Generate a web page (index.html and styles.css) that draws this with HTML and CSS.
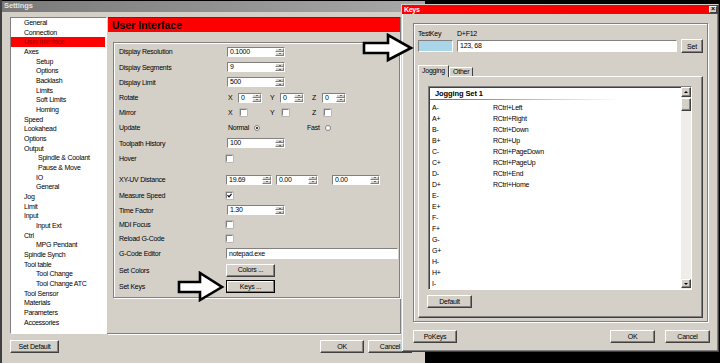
FILE: index.html
```html
<!DOCTYPE html>
<html>

<head>
    <meta charset="UTF-8">
    <meta name="viewport" content="width=device-width, initial-scale=1">
    <title>Settings</title>
    <link rel="stylesheet" href="styles.css">
</head>

<body>
    <!-- settings window -->
    <div class="settings">
        <div class="titlebar">Settings</div>
        <div class="settings-main">
            <!-- page tree -->
            <ul class="tree">
                <li>General</li>
                <li>Connection</li>
                <li class="selected">User Interface</li>
                <li>Axes</li>
                <li class="sub">Setup</li>
                <li class="sub">Options</li>
                <li class="sub">Backlash</li>
                <li class="sub">Limits</li>
                <li class="sub">Soft Limits</li>
                <li class="sub">Homing</li>
                <li>Speed</li>
                <li>Lookahead</li>
                <li>Options</li>
                <li>Output</li>
                <li class="sub2">Spindle &amp; Coolant</li>
                <li class="sub2">Pause &amp; Move</li>
                <li class="sub">IO</li>
                <li class="sub">General</li>
                <li>Jog</li>
                <li>Limit</li>
                <li>Input</li>
                <li class="sub">Input Ext</li>
                <li>Ctrl</li>
                <li class="sub">MPG Pendant</li>
                <li>Spindle Synch</li>
                <li>Tool table</li>
                <li class="sub">Tool Change</li>
                <li class="sub">Tool Change ATC</li>
                <li>Tool Sensor</li>
                <li>Materials</li>
                <li>Parameters</li>
                <li>Accessories</li>
            </ul>

            <!-- user interface page -->
            <div class="page">
                <div class="page-header">User Interface</div>
                <div class="group">
                    <div class="row">
                        <span class="label">Display Resolution</span>
                        <span class="num w58"><span class="val">0.1000</span><span class="spin"><i></i><i class="dn"></i></span></span>
                    </div>
                    <div class="row">
                        <span class="label">Display Segments</span>
                        <span class="num w58"><span class="val">9</span><span class="spin"><i></i><i class="dn"></i></span></span>
                    </div>
                    <div class="row">
                        <span class="label">Display Limit</span>
                        <span class="num w58"><span class="val">500</span><span class="spin"><i></i><i class="dn"></i></span></span>
                    </div>
                    <div class="row">
                        <span class="label">Rotate</span>
                        <span class="axis"><span class="axis-name">X</span><span class="num w24"><span class="val">0</span><span class="spin"><i></i><i class="dn"></i></span></span></span>
                        <span class="axis"><span class="axis-name">Y</span><span class="num w24"><span class="val">0</span><span class="spin"><i></i><i class="dn"></i></span></span></span>
                        <span class="axis"><span class="axis-name">Z</span><span class="num w24"><span class="val">0</span><span class="spin"><i></i><i class="dn"></i></span></span></span>
                    </div>
                    <div class="row">
                        <span class="label">Mirror</span>
                        <span class="axis"><span class="axis-name">X</span><span class="check"></span></span>
                        <span class="axis"><span class="axis-name">Y</span><span class="check"></span></span>
                        <span class="axis"><span class="axis-name">Z</span><span class="check"></span></span>
                    </div>
                    <div class="row">
                        <span class="label">Update</span>
                        <span class="opt normal">Normal<span class="radio on"></span></span>
                        <span class="opt">Fast<span class="radio"></span></span>
                    </div>
                    <div class="row">
                        <span class="label">Toolpath History</span>
                        <span class="num w58"><span class="val">100</span><span class="spin"><i></i><i class="dn"></i></span></span>
                    </div>
                    <div class="row">
                        <span class="label">Hover</span>
                        <span class="check"></span>
                    </div>
                    <div class="spacer"></div>
                    <div class="row">
                        <span class="label">XY-UV Distance</span>
                        <span class="num w46"><span class="val">19.69</span><span class="spin"><i></i><i class="dn"></i></span></span>
                        <span class="num w42 gap4"><span class="val">0.00</span><span class="spin"><i></i><i class="dn"></i></span></span>
                        <span class="num w48 gap14"><span class="val">0.00</span><span class="spin"><i></i><i class="dn"></i></span></span>
                    </div>
                    <div class="row">
                        <span class="label">Measure Speed</span>
                        <span class="check"><svg width="5" height="5" viewBox="0 0 5 5"><path d="M0.5 2.2 L2 3.8 L4.6 0.8" fill="none" stroke="#000" stroke-width="1.2" /></svg></span>
                    </div>
                    <div class="row">
                        <span class="label">Time Factor</span>
                        <span class="num w58"><span class="val">1.30</span><span class="spin"><i></i><i class="dn"></i></span></span>
                    </div>
                    <div class="row short">
                        <span class="label">MDI Focus</span>
                        <span class="check"></span>
                    </div>
                    <div class="row">
                        <span class="label">Reload G-Code</span>
                        <span class="check"></span>
                    </div>
                    <div class="row">
                        <span class="label">G-Code Editor</span>
                        <span class="text-input">notepad.exe</span>
                    </div>
                    <div class="row tall">
                        <span class="label">Set Colors</span>
                        <button class="btn small">Colors ...</button>
                    </div>
                    <div class="row">
                        <span class="label">Set Keys</span>
                        <button class="btn small focus">Keys ...</button>
                    </div>
                </div>
            </div>
        </div>
        <div class="settings-footer">
            <button class="btn set-default">Set Default</button>
            <button class="btn ok">OK</button>
            <button class="btn cancel">Cancel</button>
        </div>
    </div>

    <!-- keys dialog -->
    <div class="keys">
        <div class="keys-title">
            <span>Keys</span>
            <span class="close">×</span>
        </div>
        <div class="keys-body">
            <div class="frame">
                <div class="tk-labels">
                    <span class="tk-name">TestKey</span>
                    <span>D+F12</span>
                </div>
                <div class="tk-row">
                    <span class="tk-box"></span>
                    <span class="tk-input">123, 68</span>
                    <button class="btn tk-set">Set</button>
                </div>
                <div class="tabs">
                    <span class="tab active">Jogging</span>
                    <span class="tab">Other</span>
                </div>
                <div class="tab-panel">
                    <div class="listbox">
                        <div class="lb-main">
                            <div class="lb-head">Jogging Set 1</div>
                            <div class="lb-rows">
                                <div class="lb-row"><span class="lb-key">A-</span><span>RCtrl+Left</span></div>
                                <div class="lb-row"><span class="lb-key">A+</span><span>RCtrl+Right</span></div>
                                <div class="lb-row"><span class="lb-key">B-</span><span>RCtrl+Down</span></div>
                                <div class="lb-row"><span class="lb-key">B+</span><span>RCtrl+Up</span></div>
                                <div class="lb-row"><span class="lb-key">C-</span><span>RCtrl+PageDown</span></div>
                                <div class="lb-row"><span class="lb-key">C+</span><span>RCtrl+PageUp</span></div>
                                <div class="lb-row"><span class="lb-key">D-</span><span>RCtrl+End</span></div>
                                <div class="lb-row"><span class="lb-key">D+</span><span>RCtrl+Home</span></div>
                                <div class="lb-row"><span class="lb-key">E-</span></div>
                                <div class="lb-row"><span class="lb-key">E+</span></div>
                                <div class="lb-row"><span class="lb-key">F-</span></div>
                                <div class="lb-row"><span class="lb-key">F+</span></div>
                                <div class="lb-row"><span class="lb-key">G-</span></div>
                                <div class="lb-row"><span class="lb-key">G+</span></div>
                                <div class="lb-row"><span class="lb-key">H-</span></div>
                                <div class="lb-row"><span class="lb-key">H+</span></div>
                                <div class="lb-row"><span class="lb-key">I-</span></div>
                            </div>
                        </div>
                        <div class="scrollbar">
                            <span class="sb-btn up"></span>
                            <span class="sb-thumb"></span>
                            <span class="sb-track"></span>
                            <span class="sb-btn down"></span>
                        </div>
                    </div>
                    <button class="btn default">Default</button>
                </div>
            </div>
            <div class="keys-footer">
                <button class="btn pokeys">PoKeys</button>
                <button class="btn k-ok">OK</button>
                <button class="btn k-cancel">Cancel</button>
            </div>
        </div>
    </div>

    <!-- callout arrows -->
    <svg class="arrow arrow-testkey" width="52" height="30" viewBox="0 0 52 30">
        <polygon points="2,10 26,10 26,2 49,15 26,27 26,20 2,20" fill="#fff" stroke="#000" stroke-width="2.6" />
    </svg>
    <svg class="arrow arrow-keys" width="48" height="31" viewBox="0 0 48 31">
        <polygon points="2,11 23,11 23,2 45,16 23,29 23,21 2,21" fill="#fff" stroke="#000" stroke-width="2.6" />
    </svg>
</body>

</html>
```

FILE: styles.css
```css
* {
    box-sizing: border-box;
}

body {
    margin: 0;
    width: 720px;
    height: 363px;
    overflow: hidden;
    position: relative;
    background-color: #000;
    font-family: "Liberation Sans", Arial, sans-serif;
    font-size: 7px;
    letter-spacing: -0.25px;
    color: #000;
}

button {
    font: inherit;
    letter-spacing: inherit;
    color: inherit;
    margin: 0;
    padding: 0;
}

/* raised windows button */
.btn {
    height: 13px;
    line-height: 10px;
    text-align: center;
    background-color: #d4d0c8;
    border: 1px solid;
    border-color: #fff #404040 #404040 #fff;
    box-shadow: inset -1px -1px 0 #808080;
}

/* settings window */
.settings {
    width: 425px;
    height: 363px;
    display: flex;
    flex-direction: column;
    background-color: #d4d0c8;
    border-left: 2px solid #404040;
}

.titlebar {
    height: 12px;
    padding-left: 2px;
    border-top: 1px solid #000;
    background: linear-gradient(to right, #7a7a7a, #a8a8a8);
    color: #e4e4e4;
    font-size: 7.5px;
    font-weight: bold;
    letter-spacing: -0.1px;
    line-height: 10px;
}

.settings-main {
    display: flex;
    padding: 5px 0 0 8px;
}

.tree {
    list-style: none;
    margin: 0;
    padding: 0;
    width: 97px;
    height: 317px;
    overflow: hidden;
    background-color: #fff;
    border: 1px solid;
    border-color: #808080 #fff #fff #808080;
}

.tree li {
    height: 9.68px;
    line-height: 9.68px;
    padding-left: 13px;
    white-space: nowrap;
}

.tree .sub {
    padding-left: 25px;
}

.tree .sub2 {
    padding-left: 27px;
}

.tree .selected {
    margin-right: 1px;
    background-color: #f00;
    color: #a00000;
}

.page {
    width: 294px;
    height: 317px;
    padding-left: 1px;
    border-right: 1px solid #808080;
    border-bottom: 1px solid #808080;
    box-shadow: 1px 1px 0 #fff;
}

.page-header {
    height: 15px;
    padding-left: 4px;
    background-color: #f00;
    border-top: 1px solid #c00000;
    font-size: 10.5px;
    font-weight: bold;
    letter-spacing: 0;
    line-height: 14px;
}

.group {
    height: 256px;
    margin: 10px 0 0 5px;
    padding: 1.4px 0 0 5px;
    border: 1px solid #808080;
    box-shadow: inset 1px 1px 0 #fff, 1px 1px 0 #fff;
}

.row {
    display: flex;
    align-items: center;
    height: 15.2px;
    white-space: nowrap;
}

.row.short {
    height: 13px;
}

.row.tall {
    height: 18px;
}

.spacer {
    height: 6.4px;
}

.label {
    width: 107px;
    flex-shrink: 0;
}

/* spin edit */
.num {
    display: flex;
    height: 10px;
    margin-left: 1px;
    background-color: #fff;
    border: 1px solid;
    border-color: #808080 #fff #fff #808080;
}

.w58 { width: 58px; }
.w24 { width: 24px; }
.w46 { width: 46px; margin-left: 0; }
.w42 { width: 42px; }
.w48 { width: 48px; }
.gap4 { margin-left: 4px; }
.gap14 { margin-left: 14px; }

.val {
    flex: 1;
    padding-left: 2px;
    line-height: 8px;
    overflow: hidden;
}

.spin {
    width: 9px;
    display: flex;
    flex-direction: column;
    background-color: #d4d0c8;
}

.spin i {
    flex: 1;
    display: flex;
    align-items: center;
    justify-content: center;
    border: 1px solid;
    border-color: #fff #808080 #808080 #fff;
}

.spin i::before {
    content: "";
    border-left: 1.5px solid transparent;
    border-right: 1.5px solid transparent;
    border-bottom: 1.5px solid #000;
}

.spin i.dn::before {
    border-bottom: 0;
    border-top: 1.5px solid #000;
}

.axis {
    display: flex;
    align-items: center;
    width: 42px;
}

.axis-name {
    width: 12px;
    padding-left: 2px;
}

.axis .num {
    margin-left: 0;
}

.axis .check {
    margin-left: 2px;
}

.check {
    width: 7px;
    height: 7px;
    display: flex;
    align-items: center;
    justify-content: center;
    background-color: #fff;
    border: 1px solid;
    border-color: #808080 #fff #fff #808080;
    box-shadow: 0 0 0 0.5px #a0a0a0;
}

.opt {
    display: flex;
    align-items: center;
    padding-left: 2px;
}

.opt.normal {
    width: 79px;
}

.radio {
    width: 6px;
    height: 6px;
    margin-left: 5px;
    display: flex;
    align-items: center;
    justify-content: center;
    background-color: #fff;
    border: 1px solid #808080;
    border-radius: 50%;
}

.radio.on::after {
    content: "";
    width: 2px;
    height: 2px;
    border-radius: 50%;
    background-color: #000;
}

.text-input {
    width: 172px;
    height: 11px;
    padding-left: 2px;
    line-height: 9px;
    background-color: #fff;
    border: 1px solid;
    border-color: #808080 #fff #fff #808080;
}

.btn.small {
    width: 49px;
}

.btn.focus {
    border-color: #000;
    box-shadow: inset -1px -1px 0 #808080, inset 1px 1px 0 #fff;
}

.settings-footer {
    display: flex;
    padding: 6px 13px 0 8px;
}

.set-default {
    width: 49px;
}

.ok {
    width: 44px;
    margin-left: auto;
}

.cancel {
    width: 44px;
    margin-left: 4px;
}

/* keys dialog */
.keys {
    position: absolute;
    left: 401px;
    top: 4px;
    width: 318px;
    height: 348px;
    background-color: #d4d0c8;
    border: 1px solid;
    border-color: #d4d0c8 #404040 #404040 #d4d0c8;
    box-shadow: inset 1px 1px 0 #fff, inset -1px -1px 0 #808080;
}

.keys-title {
    height: 9px;
    display: flex;
    align-items: center;
    justify-content: space-between;
    padding-left: 2px;
    background: linear-gradient(to right, #f00, #f40000);
    color: #fff;
    font-weight: bold;
    letter-spacing: -0.3px;
}

.close {
    width: 8px;
    height: 7px;
    margin-right: 1px;
    background-color: #d4d0c8;
    border: 1px solid;
    border-color: #fff #404040 #404040 #fff;
    color: #000;
    font-size: 7px;
    line-height: 4px;
    text-align: center;
}

.keys-body {
    padding: 9px 8px 0 11px;
}

.frame {
    width: 295px;
    height: 299px;
    padding: 5px 4px 0 4px;
    border: 1px solid #808080;
    box-shadow: inset 1px 1px 0 #fff, 1px 1px 0 #fff;
}

.tk-labels {
    display: flex;
    height: 10px;
    line-height: 10px;
}

.tk-name {
    width: 39px;
}

.tk-row {
    display: flex;
    align-items: center;
    height: 14px;
}

.tk-box {
    width: 35px;
    height: 12px;
    background-color: #a9d5e8;
    border: 1px solid;
    border-color: #808080 #fff #fff #808080;
}

.tk-input {
    width: 220px;
    height: 12px;
    margin-left: 4px;
    padding-left: 2px;
    line-height: 10px;
    background-color: #fff;
    border: 1px solid;
    border-color: #808080 #fff #fff #808080;
}

.tk-set {
    width: 22px;
    height: 14px;
    margin-left: 4px;
    line-height: 11px;
}

.tabs {
    display: flex;
    align-items: flex-end;
    height: 11px;
    margin-top: 12px;
}

.tab {
    height: 9px;
    padding: 0 3px;
    line-height: 8px;
    border: 1px solid;
    border-bottom: 0;
    border-color: #fff #404040 #404040 #fff;
}

.tab.active {
    position: relative;
    z-index: 1;
    width: 31px;
    height: 12px;
    margin-bottom: -1px;
    line-height: 10px;
    background-color: #d4d0c8;
}

.tab-panel {
    height: 242px;
    padding: 9px 10px 0 9px;
    border: 1px solid;
    border-color: #fff #404040 #404040 #fff;
    box-shadow: inset -1px -1px 0 #808080;
}

.listbox {
    height: 204px;
    display: flex;
    overflow: hidden;
    background-color: #fff;
    border: 1px solid;
    border-color: #808080 #fff #fff #808080;
    box-shadow: inset 1px 1px 0 #404040;
}

.lb-main {
    flex: 1;
    padding: 1px 0 0 1px;
}

.lb-head {
    height: 12px;
    padding-left: 5px;
    font-size: 7.5px;
    font-weight: bold;
    letter-spacing: -0.1px;
    line-height: 11px;
    border-bottom: 1px solid;
    border-image: linear-gradient(to right, #e03030, #f4c0c0 50%, #fff 75%) 1;
}

.lb-rows {
    padding-top: 1.5px;
}

.lb-row {
    display: flex;
    height: 11px;
    line-height: 11px;
    padding-left: 2px;
}

.lb-key {
    width: 61px;
}

.scrollbar {
    width: 10px;
    display: flex;
    flex-direction: column;
    padding-bottom: 1px;
    background-color: #eeede9;
}

.sb-btn,
.sb-thumb {
    display: flex;
    align-items: center;
    justify-content: center;
    background-color: #d4d0c8;
    border: 1px solid;
    border-color: #fff #404040 #404040 #fff;
    box-shadow: inset -1px -1px 0 #808080;
}

.sb-btn {
    height: 10px;
}

.sb-btn.down {
    height: 9px;
}

.sb-btn::before {
    content: "";
    border-left: 2px solid transparent;
    border-right: 2px solid transparent;
    border-bottom: 2px solid #000;
}

.sb-btn.down::before {
    border-bottom: 0;
    border-top: 2px solid #000;
}

.sb-thumb {
    height: 13px;
    margin-top: 1px;
}

.sb-track {
    flex: 1;
}

.btn.default {
    width: 45px;
    margin: 5px 0 0 -1px;
}

.keys-footer {
    display: flex;
    margin-top: 8px;
}

.pokeys {
    width: 44px;
}

.k-ok {
    width: 45px;
    margin-left: auto;
}

.k-cancel {
    width: 45px;
    margin-left: 10px;
}

/* callouts drawn over both windows */
.arrow {
    position: absolute;
}

.arrow-testkey {
    left: 362px;
    top: 33px;
}

.arrow-keys {
    left: 177px;
    top: 271px;
}
```
